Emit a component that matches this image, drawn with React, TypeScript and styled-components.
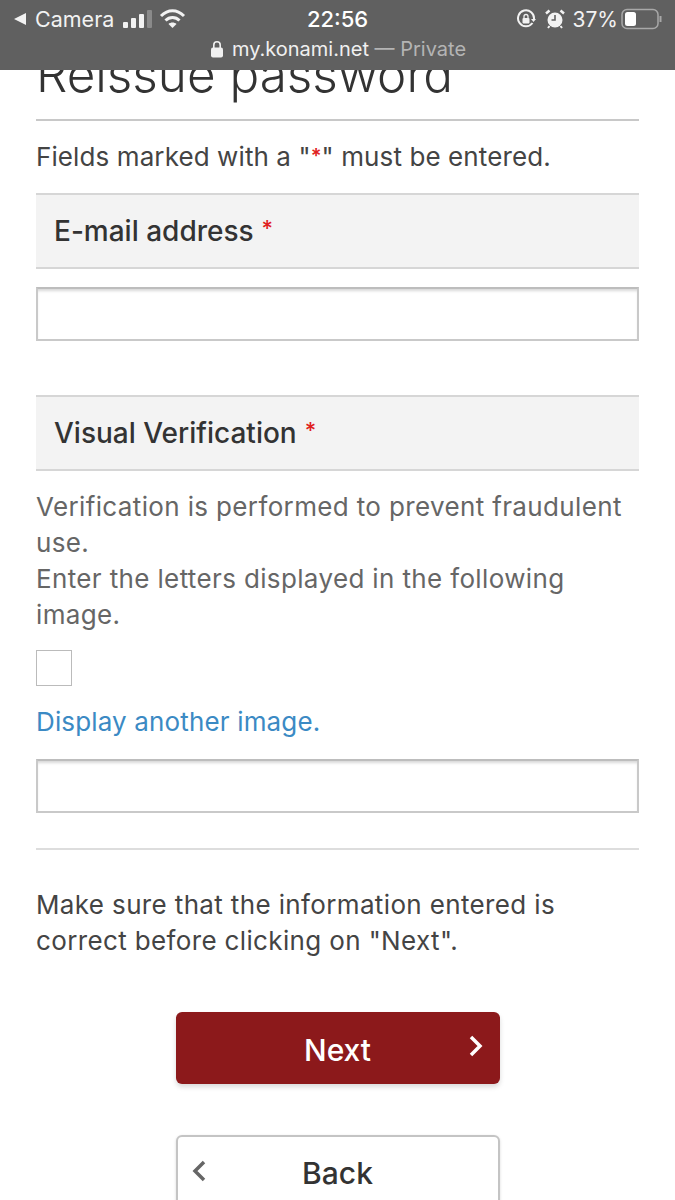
import React from 'react';
import styled, { createGlobalStyle } from 'styled-components';

const GlobalStyle = createGlobalStyle`
  html, body {
    margin: 0;
    padding: 0;
    background: #fff;
  }
  * {
    box-sizing: border-box;
  }
`;

const Screen = styled.div`
  position: relative;
  width: 675px;
  height: 1200px;
  overflow: hidden;
  background: #fff;
  font-family: Inter, "Liberation Sans", sans-serif;
  color: #333;
`;

const StatusBar = styled.div`
  position: absolute;
  top: 0;
  left: 0;
  right: 0;
  height: 70px;
  background: #606060;
  color: #fff;
  z-index: 2;
`;

const StatusLeft = styled.div`
  position: absolute;
  top: 7px;
  left: 13px;
  display: flex;
  align-items: center;
  height: 24px;
  font-size: 21.5px;
  color: #f2f2f2;
`;

const CameraLabel = styled.span`
  margin: 0 8px 0 8px;
`;

const Wifi = styled.svg`
  margin-left: 7px;
`;

const Clock = styled.div`
  position: absolute;
  top: 7px;
  left: 0;
  right: 0;
  text-align: center;
  font-size: 22px;
  line-height: 24px;
  font-weight: 500;
`;

const StatusRight = styled.div`
  position: absolute;
  top: 7px;
  right: 12px;
  display: flex;
  align-items: center;
  height: 24px;
  font-size: 21px;
  color: #f2f2f2;
`;

const Percent = styled.span`
  margin: 0 3px 0 8px;
`;

const AlarmIcon = styled.svg`
  margin-left: 9px;
`;

const UrlRow = styled.div`
  position: absolute;
  top: 36px;
  left: 1px;
  right: 0;
  display: flex;
  justify-content: center;
  align-items: center;
  gap: 8px;
  height: 26px;
  font-size: 20px;
  color: #f0f0f0;
`;

const Private = styled.span`
  color: #b4b4b4;
`;

const Content = styled.main`
  padding: 46px 36px 0;
`;

const Title = styled.h1`
  margin: 0;
  height: 75px;
  border-bottom: 2px solid #c8c8c8;
  font-size: 49.4px;
  line-height: 56px;
  font-weight: 300;
  color: #333;
`;

const Text = styled.p`
  margin: 0;
  font-size: 26px;
  line-height: 36px;
  letter-spacing: 0.36px;
  color: #444;
`;

const RequiredNote = styled(Text)`
  margin: 17px 0 18px;
  letter-spacing: 0.1px;
`;

const Red = styled.span`
  color: #e02020;
  font-size: 20px;
  font-weight: 600;
  vertical-align: 3px;
`;

const SectionHead = styled.h2`
  margin: 0;
  height: 76px;
  padding-left: 18px;
  display: flex;
  align-items: center;
  background: #f3f3f3;
  border-top: 2px solid #d6d6d6;
  border-bottom: 2px solid #d6d6d6;
  font-size: 28px;
  font-weight: 500;
  color: #333;
`;

const Star = styled.span`
  align-self: flex-start;
  margin: 22px 0 0 8px;
  font-size: 22px;
  line-height: 22px;
  color: #e02020;
`;

const Input = styled.div<{ $top: number; $bottom: number }>`
  height: 54px;
  margin-top: ${(p) => p.$top}px;
  margin-bottom: ${(p) => p.$bottom}px;
  border: 2px solid #c9c9c9;
  border-top-color: #bdbdbd;
  box-shadow: inset 0 3px 3px -1px #d8d8d8;
  background: #fff;
`;

const Instructions = styled(Text)`
  margin-top: 18px;
  color: #666;
`;

const Captcha = styled.div`
  width: 36px;
  height: 36px;
  margin-top: 17px;
  border: 1px solid #bbb;
`;

const LinkText = styled.a`
  display: block;
  margin-top: 18px;
  font-size: 26px;
  line-height: 36px;
  letter-spacing: 0.15px;
  color: #3b8ac4;
`;

const Rule = styled.hr`
  margin: 0;
  border: 0;
  border-top: 2px solid #ddd;
`;

const Confirm = styled(Text)`
  margin-top: 37px;
`;

const Buttons = styled.div`
  display: flex;
  flex-direction: column;
  align-items: center;
  gap: 51px;
  margin-top: 53px;
`;

const Button = styled.div<{ $primary?: boolean }>`
  position: relative;
  width: 324px;
  height: 72px;
  padding-top: 3px;
  display: flex;
  align-items: center;
  justify-content: center;
  border-radius: 6px;
  font-size: 30px;
  font-weight: 500;
  background: ${(p) => (p.$primary ? '#8c191b' : '#fff')};
  color: ${(p) => (p.$primary ? '#fff' : '#333')};
  border: ${(p) => (p.$primary ? 'none' : '2px solid #c4c4c4')};
  box-shadow: ${(p) => (p.$primary ? '0 3px 5px rgba(0,0,0,0.15)' : '0 1px 3px rgba(0,0,0,0.15)')};
`;

const Chevron = styled.svg<{ $left?: boolean }>`
  position: absolute;
  top: 23px;
  ${(p) => (p.$left ? 'left: 13px;' : 'right: 16px;')}
`;

export default function App() {
  return (
    <Screen>
      <GlobalStyle />
      <StatusBar>
        <StatusLeft>
          <svg width="14" height="14" viewBox="0 0 14 14">
            <path d="M1 7 L13 1 V13 Z" fill="#f2f2f2" />
          </svg>
          <CameraLabel>Camera</CameraLabel>
          <svg width="30" height="20" viewBox="0 0 30 20">
            <rect x="1" y="13" width="5" height="6" rx="1" fill="#f2f2f2" />
            <rect x="9" y="9" width="5" height="10" rx="1" fill="#f2f2f2" />
            <rect x="17" y="5" width="5" height="14" rx="1" fill="#f2f2f2" />
            <rect x="25" y="1" width="5" height="18" rx="1" fill="#8a8a8a" />
          </svg>
          <Wifi width="27" height="20" viewBox="0 0 27 20" fill="none" stroke="#f2f2f2" strokeWidth="3">
            <path d="M2 7 C9 0 18 0 25 7" />
            <path d="M6.5 11.5 C10.5 7.5 16.5 7.5 20.5 11.5" />
            <path d="M13.5 19 L9.5 15 C11.5 13 15.5 13 17.5 15 Z" fill="#f2f2f2" stroke="none" />
          </Wifi>
        </StatusLeft>
        <Clock>22:56</Clock>
        <StatusRight>
          <svg width="20" height="20" viewBox="0 0 20 20" fill="none">
            <path d="M16.5 14 A8 8 0 1 1 18 10" stroke="#f2f2f2" strokeWidth="2" />
            <path d="M15 10 H20 L17.5 13 Z" fill="#f2f2f2" />
            <rect x="6.5" y="9" width="7" height="5.5" rx="1" fill="#f2f2f2" />
            <path d="M8 9 V7.5 A2 2 0 0 1 12 7.5 V9" stroke="#f2f2f2" strokeWidth="1.3" />
          </svg>
          <AlarmIcon width="20" height="20" viewBox="0 0 20 20" fill="none">
            <circle cx="10" cy="11" r="7.5" fill="#f2f2f2" />
            <path d="M10 6 V11 H6.5" stroke="#606060" strokeWidth="1.6" />
            <path d="M1 4.5 L4.5 1.5 M15.5 1.5 L19 4.5" stroke="#f2f2f2" strokeWidth="2.5" />
            <path d="M4.5 17 L3 19 M15.5 17 L17 19" stroke="#f2f2f2" strokeWidth="2" />
          </AlarmIcon>
          <Percent>37%</Percent>
          <svg width="42" height="22" viewBox="0 0 42 22" fill="none">
            <rect x="1" y="1.5" width="36" height="19" rx="5" stroke="#a8a8a8" strokeWidth="1.5" />
            <rect x="4" y="4" width="11" height="14" rx="2.5" fill="#fff" />
            <path d="M39.5 8 V14" stroke="#a8a8a8" strokeWidth="2" />
          </svg>
        </StatusRight>
        <UrlRow>
          <svg width="14" height="18" viewBox="0 0 14 18" fill="none">
            <rect x="1" y="7.5" width="12" height="10" rx="2" fill="#f0f0f0" />
            <path d="M3.8 8 V5 A3.2 3.2 0 0 1 10.2 5 V8" stroke="#f0f0f0" strokeWidth="1.6" />
          </svg>
          <span>
            my.konami.net <Private>— Private</Private>
          </span>
        </UrlRow>
      </StatusBar>
      <Content>
        <Title>Reissue password</Title>
        <RequiredNote>
          Fields marked with a "<Red>*</Red>" must be entered.
        </RequiredNote>
        <SectionHead>
          E-mail address<Star>*</Star>
        </SectionHead>
        <Input $top={18} $bottom={54} />
        <SectionHead>
          Visual Verification<Star>*</Star>
        </SectionHead>
        <Instructions>
          Verification is performed to prevent fraudulent use.
          <br />
          Enter the letters displayed in the following image.
        </Instructions>
        <Captcha />
        <LinkText>Display another image.</LinkText>
        <Input $top={19} $bottom={35} />
        <Rule />
        <Confirm>Make sure that the information entered is correct before clicking on "Next".</Confirm>
        <Buttons>
          <Button $primary>
            Next
            <Chevron width="16" height="22" viewBox="0 0 16 22" fill="none" stroke="#fff" strokeWidth="3.5">
              <path d="M3 2 L12 11 L3 20" />
            </Chevron>
          </Button>
          <Button>
            Back
            <Chevron $left width="16" height="22" viewBox="0 0 16 22" fill="none" stroke="#666" strokeWidth="3.5">
              <path d="M13 2 L4 11 L13 20" />
            </Chevron>
          </Button>
        </Buttons>
      </Content>
    </Screen>
  );
}
